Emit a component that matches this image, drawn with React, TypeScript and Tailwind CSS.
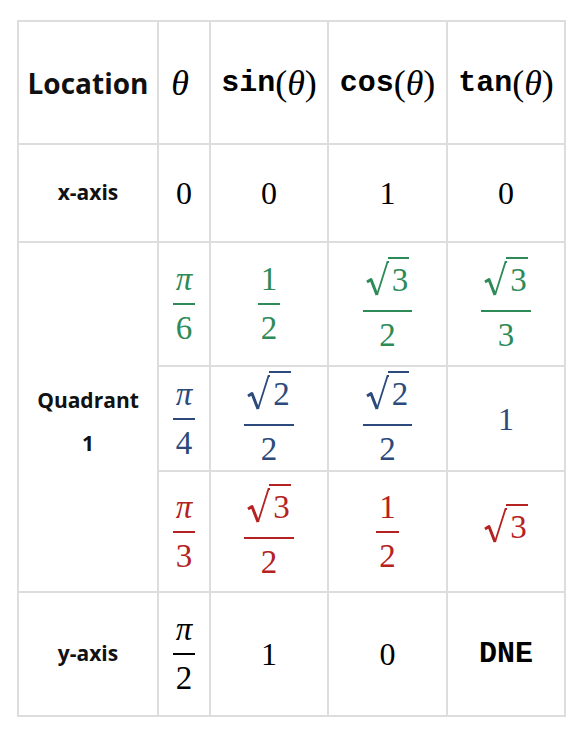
import React from 'react';

const GREEN = 'text-[#2e8a57]';
const BLUE = 'text-[#2c4b7c]';
const RED = 'text-[#b52222]';

const serif = "font-['Liberation_Serif',serif]";
const mono = "font-['Liberation_Mono',monospace]";

// vertical stacked fraction, KaTeX-ish
const Frac: React.FC<{ num: React.ReactNode; den: React.ReactNode; className?: string }> = ({ num, den, className = '' }) => (
  <span className={`inline-flex flex-col items-center ${serif} text-[33px] ${className}`}>
    <span className="px-[3px] leading-none">{num}</span>
    <span className="my-[7px] h-[2px] w-full bg-current" />
    <span className="px-[3px] leading-none">{den}</span>
  </span>
);

// radical sign + overline
const Sqrt: React.FC<{ children: React.ReactNode }> = ({ children }) => (
  <span className="inline-flex items-stretch">
    <svg width="23" height="36" viewBox="0 0 23 36" className="shrink-0 self-end">
      <path d="M1 21 L5 18.5 L11 34" fill="none" stroke="currentColor" strokeWidth="3" strokeLinejoin="round" />
      <path d="M11 34 L21.5 1 L23 1" fill="none" stroke="currentColor" strokeWidth="1.8" />
    </svg>
    <span className="-ml-[1px] border-t-2 border-current pl-[4px] pt-[5px] pr-[1px] leading-none">{children}</span>
  </span>
);

const Pi = () => <span className="italic">π</span>;

const Cell: React.FC<{ children?: React.ReactNode; className?: string }> = ({ children, className = '' }) => (
  <div className={`flex items-center justify-center bg-white ${className}`}>{children}</div>
);

const Label: React.FC<{ children: React.ReactNode }> = ({ children }) => (
  <span className="font-['Open_Sans',sans-serif] text-[21px] font-bold text-[#111]">{children}</span>
);

const Num: React.FC<{ children: React.ReactNode; className?: string }> = ({ children, className = '' }) => (
  <span className={`${serif} text-[32px] leading-none ${className}`}>{children}</span>
);

const Head: React.FC<{ fn: string }> = ({ fn }) => (
  <span className="flex items-center leading-none text-black">
    <span className={`${mono} text-[30px] font-bold`}>{fn}</span>
    <span className={`${serif} text-[36px]`}>
      (<span className="italic">θ</span>)
    </span>
  </span>
);

export default function App() {
  return (
    <div className="min-h-[737px] bg-white pl-[17px] pt-[20px]">
      <div className="grid w-fit grid-cols-[138px_50px_116px_117px_116px] grid-rows-[121px_96px_122px_103px_119px_122px] gap-[2px] bg-[#dddddd] p-[2px]">
        {/* header */}
        <Cell>
          <span className="font-['Open_Sans',sans-serif] text-[28px] font-bold text-[#111]">Location</span>
        </Cell>
        <Cell>
          <span className={`${serif} pr-[8px] text-[36px] italic leading-none text-black`}>θ</span>
        </Cell>
        <Cell>
          <Head fn="sin" />
        </Cell>
        <Cell>
          <Head fn="cos" />
        </Cell>
        <Cell>
          <Head fn="tan" />
        </Cell>

        {/* x-axis */}
        <Cell>
          <Label>x-axis</Label>
        </Cell>
        <Cell><Num>0</Num></Cell>
        <Cell><Num>0</Num></Cell>
        <Cell><Num>1</Num></Cell>
        <Cell><Num>0</Num></Cell>

        {/* quadrant 1 */}
        <Cell className="row-span-3 flex-col gap-[12px] pt-[10px]">
          <Label>Quadrant</Label>
          <Label>1</Label>
        </Cell>

        <Cell><Frac className={GREEN} num={<Pi />} den="6" /></Cell>
        <Cell><Frac className={GREEN} num="1" den="2" /></Cell>
        <Cell><Frac className={GREEN} num={<Sqrt>3</Sqrt>} den="2" /></Cell>
        <Cell><Frac className={GREEN} num={<Sqrt>3</Sqrt>} den="3" /></Cell>

        <Cell><Frac className={BLUE} num={<Pi />} den="4" /></Cell>
        <Cell><Frac className={BLUE} num={<Sqrt>2</Sqrt>} den="2" /></Cell>
        <Cell><Frac className={BLUE} num={<Sqrt>2</Sqrt>} den="2" /></Cell>
        <Cell><Num className={BLUE}>1</Num></Cell>

        <Cell><Frac className={RED} num={<Pi />} den="3" /></Cell>
        <Cell><Frac className={RED} num={<Sqrt>3</Sqrt>} den="2" /></Cell>
        <Cell><Frac className={RED} num="1" den="2" /></Cell>
        <Cell>
          <span className={`${serif} text-[33px] ${RED}`}>
            <Sqrt>3</Sqrt>
          </span>
        </Cell>

        {/* y-axis */}
        <Cell>
          <Label>y-axis</Label>
        </Cell>
        <Cell><Frac className="text-black" num={<Pi />} den="2" /></Cell>
        <Cell><Num>1</Num></Cell>
        <Cell><Num>0</Num></Cell>
        <Cell>
          <span className={`${mono} text-[30px] font-bold leading-none text-black`}>DNE</span>
        </Cell>
      </div>
    </div>
  );
}
